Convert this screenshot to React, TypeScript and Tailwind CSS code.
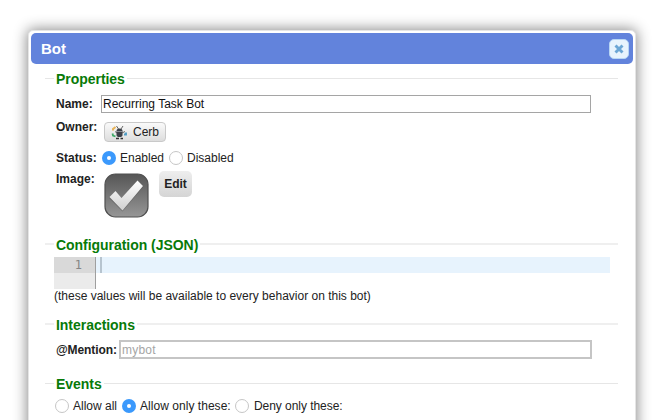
import type { ReactNode } from "react";

function Legend({ children, thick = false }: { children: ReactNode; thick?: boolean }) {
  const line = thick ? "mb-[2px] h-[2px] bg-[#efefef]" : "mb-px h-px bg-[#e6e6e6]";
  return (
    <div className="flex h-4 items-center">
      <div className={`w-[9px] ${line}`} />
      <h2 className="px-[2px] text-[14px] leading-4 font-bold tracking-[-0.04px] text-[#087a08]">{children}</h2>
      <div className={`flex-1 ${line}`} />
    </div>
  );
}

function Radio({ on = false }: { on?: boolean }) {
  return on ? (
    <span className="flex size-[14px] shrink-0 items-center justify-center rounded-full bg-[#3b99fc]">
      <span className="size-[4px] rounded-full bg-white" />
    </span>
  ) : (
    <span className="size-[14px] shrink-0 rounded-full border border-[#c6c6c6] bg-white" />
  );
}

function BotIcon() {
  return (
    <svg width="17" height="16" viewBox="0 0 17 16">
      <path d="M2 6.500V5L4.500 3" fill="none" stroke="#e8b45b" strokeWidth="2" />
      <path d="M5.500 2L7.500 5M12 2L10 5M4 7.500L6 9M11 9L14 7.500" fill="none" stroke="#666" strokeWidth="1" />
      <path d="M5.500 7Q5.500 4.500 8.500 4.500Q11.500 4.500 11.500 7V11Q11.500 13 8.500 13Q5.500 13 5.500 11Z" fill="#3c4048" />
      <path d="M6 7.500H11" stroke="#8a8f96" strokeWidth="1" />
      <path d="M1.500 9.500L2 11.500L4.500 12.500" fill="none" stroke="#3fa968" strokeWidth="1.800" />
      <path d="M13 10.500H15V8.500" fill="none" stroke="#4e9cc4" strokeWidth="1.900" />
      <path d="M5 14.500H8M9.500 14.500H12" stroke="#333" strokeWidth="1.600" />
    </svg>
  );
}

function CheckImage() {
  return (
    <svg width="45" height="45" viewBox="0 0 45 45">
      <defs>
        <linearGradient id="tile" x1="0" y1="0" x2="0" y2="1">
          <stop offset="0" stopColor="#565656" />
          <stop offset="1" stopColor="#969696" />
        </linearGradient>
        <linearGradient id="tick" x1="0" y1="0" x2="0" y2="1">
          <stop offset="0" stopColor="#ffffff" />
          <stop offset="1" stopColor="#cfcfcf" />
        </linearGradient>
      </defs>
      <rect x="1" y="1" width="43" height="43" rx="10.500" fill="url(#tile)" stroke="#505050" strokeWidth="1.200" />
      <path d="M5 25L11.500 18.500L17.500 26L33.500 8L39.500 13.500L18.500 38.500Z" fill="#555" opacity="0.5" />
      <path d="M5.500 24L11.500 18L17.500 25L33.500 7.500L39 13L18.500 37.500Z" fill="url(#tick)" />
    </svg>
  );
}

export default function App() {
  return (
    <main className="h-[420px] w-[669px] overflow-hidden bg-white px-[28px] pt-[30px] font-['Liberation_Sans',Arial,sans-serif] text-[12px] leading-[14px] text-[#222]">
      <section className="h-[430px] w-[608px] rounded-[5px] border border-[#e5e5e5] bg-white px-[2px] pt-[2px] shadow-[0_0_14px_1px_rgba(0,0,0,0.46)]">
        <header className="flex h-[31px] items-center justify-between rounded-[5px] bg-[#6283dc] pr-[4px] pl-[10px]">
          <h1 className="text-[15px] leading-4 font-bold text-white">Bot</h1>
          <button className="flex size-[20px] items-center justify-center rounded-[5px] border border-[#b8d6f4] bg-[#e8f3fd]">
            <svg width="10" height="10" viewBox="0 0 10 10">
              <path d="M1.500 1.500L8.500 8.500M8.500 1.500L1.500 8.500" stroke="#6ca6d5" strokeWidth="2.900" />
            </svg>
          </button>
        </header>

        <div className="mr-[15px] ml-[14px] pt-[7px]">
          <Legend>Properties</Legend>
          <div className="mt-[8px] flex h-[18px] items-center pl-[11px]">
            <label className="w-[45px] font-bold">Name:</label>
            <div className="flex h-[18px] w-[490px] items-center border border-[#a5a5a5] pb-px pl-px text-[#111]">
              Recurring Task Bot
            </div>
          </div>
          <div className="mt-[7px] flex h-[24px] items-start pl-[11px]">
            <label className="w-[48px] font-bold">Owner:</label>
            <button className="mt-[2px] flex h-[20px] w-[62px] items-center rounded-[4px] border border-[#c9c9c9] bg-linear-to-b from-[#fafafa] to-[#dddddd] pl-[6px]">
              <BotIcon />
              <span className="ml-[5px]">Cerb</span>
            </button>
          </div>
          <div className="mt-[7px] flex h-[14px] items-center pl-[11px]">
            <label className="w-[46px] font-bold">Status:</label>
            <Radio on />
            <span className="ml-[4px] w-[49px]">Enabled</span>
            <Radio />
            <span className="ml-[4px]">Disabled</span>
          </div>
          <div className="mt-[6px] flex h-[66px] items-start pl-[11px]">
            <label className="mt-px w-[48px] font-bold">Image:</label>
            <div className="mt-[2px] h-[45px] w-[45px]"><CheckImage /></div>
            <button className="ml-[10px] flex h-[26px] w-[33px] items-center justify-center rounded-[5px] bg-linear-to-b from-[#eeeeee] to-[#d5d5d5] font-bold">
              Edit
            </button>
          </div>

          <Legend thick>Configuration (JSON)</Legend>
          <div className="mt-[4px] ml-[9px] flex h-[32px] w-[556px]">
            <div className="w-[42px] border-r border-[#9f9f9f] bg-[#ebebeb]">
              <div className="h-[16px] bg-[#d9d9d9] pr-[13px] text-right font-['DejaVu_Sans_Mono',monospace] leading-[16px] text-[#858585]">1</div>
            </div>
            <div className="h-[16px] flex-1 bg-[#e7f3fd] pl-[4px]">
              <div className="h-[16px] w-[2px] bg-[#b7c4cf]" />
            </div>
          </div>
          <p className="ml-[9px]">(these values will be available to every behavior on this bot)</p>

          <div className="mt-[14px]"><Legend thick>Interactions</Legend></div>
          <div className="mt-[7px] flex h-[19px] items-center pl-[11px]">
            <label className="w-[63px] font-bold tracking-[-0.1px]">@Mention:</label>
            <div className="flex h-[19px] w-[473px] items-center border-2 border-[#c5c5c5] pl-px tracking-[0.2px] text-[#a5a5a5]">mybot</div>
          </div>

          <div className="mt-[17px]"><Legend>Events</Legend></div>
          <div className="mt-[7px] flex h-[14px] items-center pl-[10px]">
            <Radio />
            <span className="ml-[4px] w-[49px]">Allow all</span>
            <Radio on />
            <span className="ml-[4px] w-[95px] tracking-[0.04px]">Allow only these:</span>
            <Radio />
            <span className="ml-[5px] tracking-[-0.05px]">Deny only these:</span>
          </div>
        </div>
      </section>
    </main>
  );
}
